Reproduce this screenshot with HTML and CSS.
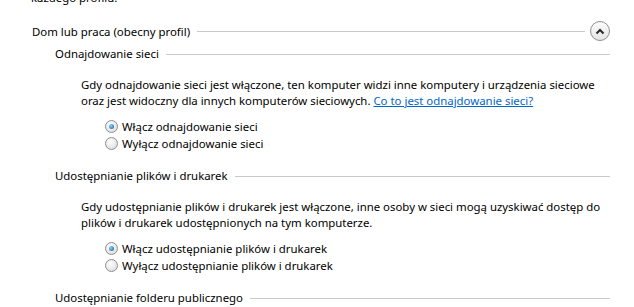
FILE: index.html
```html
<!DOCTYPE html>
<html lang="pl">
<head>
  <meta charset="UTF-8">
  <title>Zaawansowane ustawienia udostępniania</title>
  <link rel="stylesheet" href="styles.css">
</head>
<body>
<div class="page">
  <p class="intro">każdego profilu.</p>

  <div class="profile-header">
    <span class="profile-title">Dom lub praca (obecny profil)</span>
    <span class="rule"></span>
    <button type="button" class="collapse-btn" aria-label="Zwiń">
      <svg width="10" height="7" viewBox="0 0 10 7"><path d="M1.5 5.5 L5 2 L8.5 5.5" fill="none" stroke="#2a2a2a" stroke-width="2"/></svg>
    </button>
  </div>

  <div class="section">
    <div class="section-header">
      <span class="section-title">Odnajdowanie sieci</span>
      <span class="rule"></span>
    </div>
    <p class="desc">Gdy odnajdowanie sieci jest włączone, ten komputer widzi inne komputery i urządzenia sieciowe<br>oraz jest widoczny dla innych komputerów sieciowych. <a href="#">Co to jest odnajdowanie sieci?</a></p>
    <div class="options">
      <label class="option"><span class="radio checked"></span>Włącz odnajdowanie sieci</label>
      <label class="option"><span class="radio"></span>Wyłącz odnajdowanie sieci</label>
    </div>
  </div>

  <div class="section">
    <div class="section-header">
      <span class="section-title">Udostępnianie plików i drukarek</span>
      <span class="rule"></span>
    </div>
    <p class="desc">Gdy udostępnianie plików i drukarek jest włączone, inne osoby w sieci mogą uzyskiwać dostęp do<br>plików i drukarek udostępnionych na tym komputerze.</p>
    <div class="options">
      <label class="option"><span class="radio checked"></span>Włącz udostępnianie plików i drukarek</label>
      <label class="option"><span class="radio"></span>Wyłącz udostępnianie plików i drukarek</label>
    </div>
  </div>

  <div class="section">
    <div class="section-header">
      <span class="section-title">Udostępnianie folderu publicznego</span>
      <span class="rule"></span>
    </div>
  </div>
</div>
</body>
</html>
```

FILE: styles.css
```css
body {
  margin: 0;
  background-color: #ffffff;
  color: #000000;
  font-family: "Noto Sans", "Open Sans", sans-serif;
  font-size: 11.4px;
  overflow: hidden;
}

.page {
  width: 634px;
  height: 307px;
  overflow: hidden;
}

.intro {
  margin: -10px 0 0 31px;
  line-height: 16px;
}

.profile-header {
  display: flex;
  align-items: center;
  height: 22px;
  margin: 14px 0 0 32px;
  padding-right: 24px;
}

.rule {
  flex: 1;
  height: 1px;
  background-color: #c9c9c9;
  margin-left: 7px;
}

.profile-header .rule {
  margin-right: 5px;
}

.collapse-btn {
  width: 20px;
  height: 20px;
  padding: 0;
  border: 1px solid #8e8e8e;
  border-radius: 50%;
  background: linear-gradient(#fdfdfd, #e4e4e4);
  display: flex;
  align-items: center;
  justify-content: center;
}

.section {
  margin-left: 55px;
  padding-right: 24px;
}

.section-header {
  display: flex;
  align-items: center;
  height: 16px;
  line-height: 16px;
  margin-top: 16px;
}

.profile-header + .section .section-header {
  margin-top: 4px;
}

.desc {
  margin: 15px 0 0 26px;
  line-height: 16px;
  white-space: nowrap;
}

.desc a {
  color: #0066cc;
}

.options {
  margin: 9px 0 0 50px;
}

.option {
  display: flex;
  align-items: center;
  height: 17px;
  line-height: 17px;
}

.radio {
  width: 11px;
  height: 11px;
  border: 1px solid #8f8f8f;
  border-radius: 50%;
  background: radial-gradient(circle at 40% 35%, #ffffff, #d6d6d6);
  margin-right: 4px;
  display: flex;
  align-items: center;
  justify-content: center;
}

.radio.checked::after {
  content: "";
  width: 5px;
  height: 5px;
  border-radius: 50%;
  background: radial-gradient(circle at 35% 35%, #8fd3f5, #0d5c9a);
}
```
